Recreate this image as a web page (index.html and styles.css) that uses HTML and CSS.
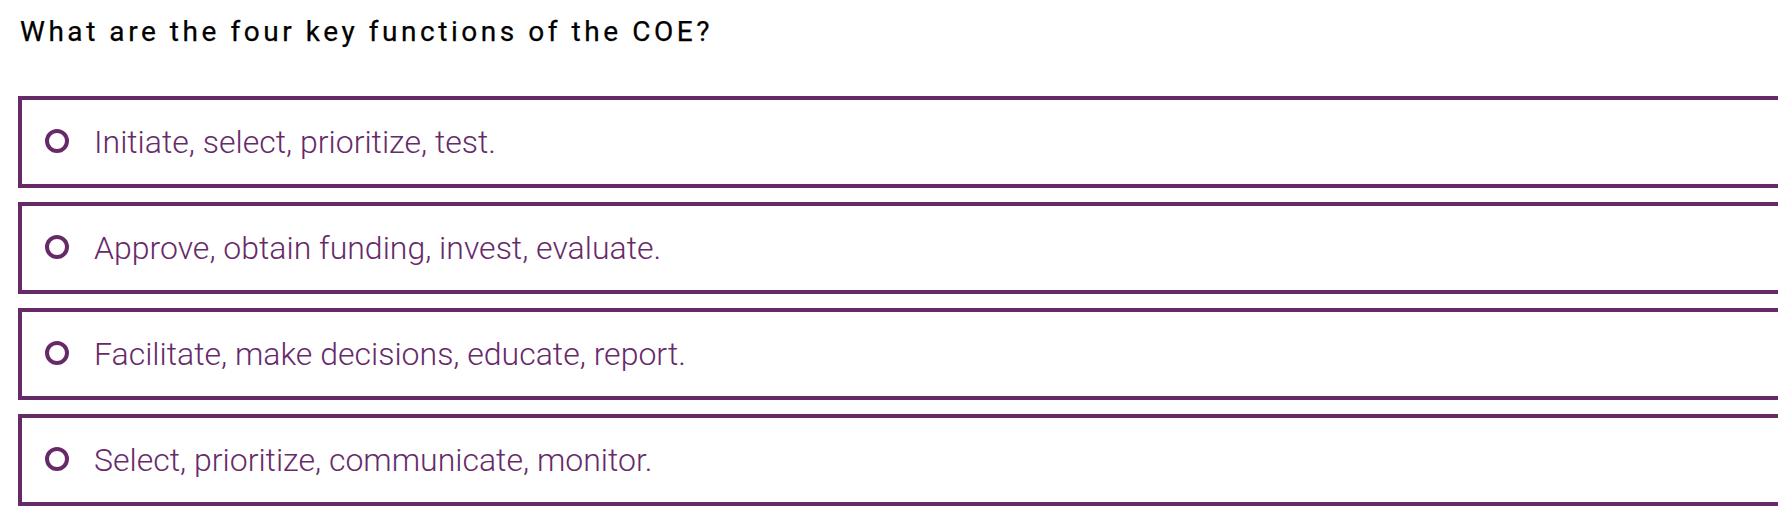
FILE: index.html
```html
<!DOCTYPE html>
<html>
<head>
    <meta charset="utf-8">
    <title>Quiz</title>
    <link rel="stylesheet" href="styles.css">
</head>
<body>

<div class="question">
    <div class="question-title">What are the four key functions of the COE?</div>

    <div class="options">
        <label class="option">
            <span class="radio"></span>
            <span class="option-text">Initiate, select, prioritize, test.</span>
        </label>
        <label class="option">
            <span class="radio"></span>
            <span class="option-text">Approve, obtain funding, invest, evaluate.</span>
        </label>
        <label class="option">
            <span class="radio"></span>
            <span class="option-text">Facilitate, make decisions, educate, report.</span>
        </label>
        <label class="option">
            <span class="radio"></span>
            <span class="option-text">Select, prioritize, communicate, monitor.</span>
        </label>
    </div>
</div>

</body>
</html>
```

FILE: styles.css
```css
/* quiz question */
html, body {
    margin: 0;
    padding: 0;
    overflow: hidden;
    background: #fff;
}

body {
    font-family: Roboto, "Liberation Sans", sans-serif;
}

.question {
    padding-left: 18px;
}

.question-title {
    margin-top: 16px;
    padding-left: 2px;
    font-size: 28px;
    line-height: 32px;
    letter-spacing: 3.55px;
    color: #000;
    -webkit-text-stroke: 0.25px #000;
}

.options {
    margin-top: 48px;
    display: flex;
    flex-direction: column;
    gap: 14px;
    width: 1800px;
}

.option {
    display: flex;
    align-items: center;
    height: 84px;
    border: 4px solid #672a69;
    cursor: pointer;
}

.radio {
    width: 16px;
    height: 16px;
    margin-left: 23px;
    margin-bottom: 3px;
    border: 4px solid #672a69;
    border-radius: 50%;
    filter: blur(0.7px);
}

.option-text {
    margin-left: 25px;
    font-size: 32px;
    font-weight: 300;
    color: #672a69;
}
```
